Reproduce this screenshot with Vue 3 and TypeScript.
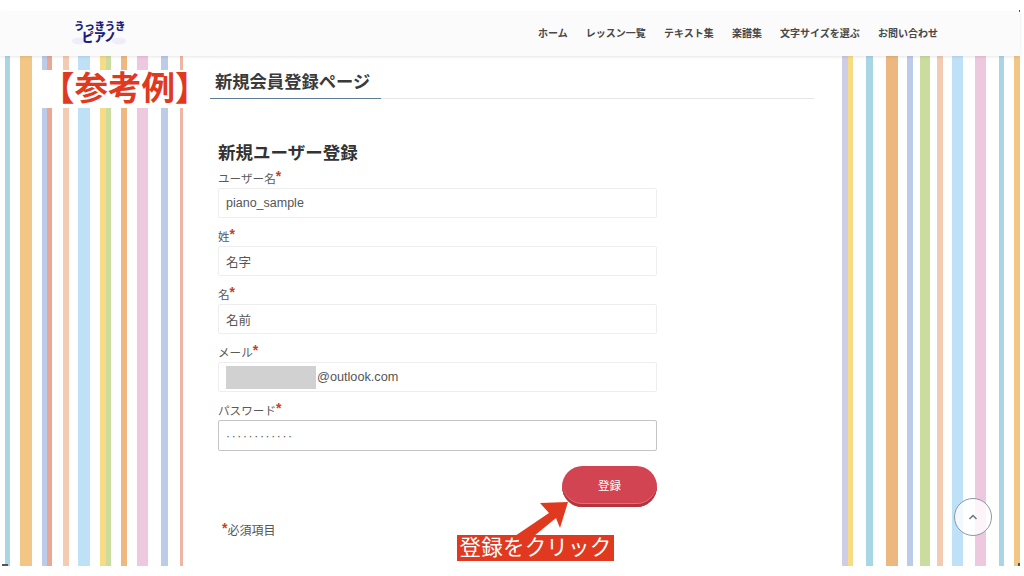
<script setup lang="ts">
interface Field { label: string; value: string; masked?: boolean; active?: boolean }
const navItems: string[] = ['ホーム', 'レッスン一覧', 'テキスト集', '楽譜集', '文字サイズを選ぶ', 'お問い合わせ']
const fields: Field[] = [
  { label: 'ユーザー名', value: 'piano_sample' },
  { label: '姓', value: '名字' },
  { label: '名', value: '名前' },
  { label: 'メール', value: '@outlook.com', masked: true },
  { label: 'パスワード', value: '············', active: true },
]
</script>

<template>
  <div class="page">
    <header class="header">
      <div class="logo">
        <svg class="cloud" width="56" height="14" viewBox="0 0 56 14">
          <ellipse cx="8" cy="8" rx="7" ry="3.5" fill="#eeedf9" />
          <ellipse cx="48" cy="8" rx="7" ry="3.5" fill="#eeedf9" />
        </svg>
        <span class="logo-text">うっきうき<br /><span class="logo-big">ピアノ</span></span>
      </div>
      <nav class="nav">
        <a v-for="item in navItems" :key="item" class="nav-item">{{ item }}</a>
      </nav>
    </header>

    <main class="main">
      <div class="stripes stripes-left"></div>
      <section class="content">
        <div class="title-bar"><h1 class="title">新規会員登録ページ</h1></div>
        <form class="form" @submit.prevent>
          <h2 class="form-title">新規ユーザー登録</h2>
          <div v-for="f in fields" :key="f.label" class="field">
            <label class="label">{{ f.label }}<span class="star">*</span></label>
            <div class="input" :class="{ 'input-active': f.active, 'input-email': f.masked }">
              <span v-if="f.masked" class="mask"></span>
              <span :class="{ dots: f.active }">{{ f.value }}</span>
            </div>
          </div>
          <div class="actions"><button class="submit" type="button">登録</button></div>
          <p class="required"><span class="star">*</span>必須項目</p>
        </form>
      </section>
      <div class="stripes stripes-right"></div>
    </main>

    <div class="sample"><span>【参考例】</span></div>
    <svg class="arrow" width="70" height="50" viewBox="0 0 70 50">
      <polygon points="66,2 38,3 47,13 13,36 32,36 54,18 58,28" fill="#e0391f" />
    </svg>
    <div class="callout">登録をクリック</div>
    <button class="to-top" type="button" aria-label="ページ上部へ">
      <svg width="12" height="8" viewBox="0 0 12 8"><path d="M2.5 6 L6 2.5 L9.500 6" fill="none" stroke="#66727e" stroke-width="1.4" /></svg>
    </button>
    <i class="corner corner-left"></i>
    <i class="corner corner-right"></i>
    <i class="edge"></i>
  </div>
</template>

<style>
html, body { margin: 0; background: #fff; }
</style>

<style scoped>
.page {
  position: relative;
  width: 1024px;
  height: 576px;
  overflow: hidden;
  box-sizing: border-box;
  padding: 12px 4px 10px 0;
  display: flex;
  flex-direction: column;
  background: #fff;
  color: #444;
  font-family: "Liberation Sans", "Noto Sans CJK JP", sans-serif;
}
.header {
  position: relative;
  z-index: 2;
  height: 44px;
  flex: none;
  display: flex;
  align-items: center;
  justify-content: space-between;
  padding: 0 82px 0 74px;
  background: #fbfbfb;
  box-shadow: 0 1px 3px rgba(0, 0, 0, 0.1);
}
.logo { position: relative; width: 50px; height: 26px; margin-top: -3px; }
.cloud { position: absolute; left: -3px; top: 13px; }
.logo-text {
  position: relative;
  display: block;
  text-align: center;
  font-size: 10.5px;
  line-height: 12px;
  font-weight: 900;
  color: #1c1f80;
  white-space: nowrap;
  letter-spacing: -0.2px;
}
.logo-big { font-size: 12px; }
.nav { display: flex; gap: 18.2px; }
.nav-item { font-size: 10px; line-height: 14px; font-weight: 700; color: #484848; white-space: nowrap; }
.main {
  flex: 1;
  min-height: 0;
  display: grid;
  grid-template-columns: 184px 658px 178px;
}
.stripes-left {
  background: linear-gradient(90deg,
    #fff 5px, #a9d6e5 5px 10px, #fff 10px 20px, #f2c785 20px 32px, #fff 32px 42px,
    #bccbe8 42px 47px, #eaa892 47px 52px, #fff 52px 63px, #f3cbb3 63px 69px, #fff 69px 78px,
    #bfe1f8 78px 90px, #fff 90px 100px, #f8dc85 100px 106px, #cbdd9e 106px 111px, #fff 111px 121px,
    #efb881 121px 127px, #fff 127px 137px, #eec8de 137px 148px, #fff 148px 161px,
    #bccbe8 161px 168px, #fff 168px 180px, #eeb5a4 180px 183px, #fff 183px);
}
.stripes-right {
  background: linear-gradient(90deg,
    #cfcce5 0 6px, #f8dc85 6px 11px, #fff 11px 24px, #a9d6e5 24px 31px, #fff 31px 44px,
    #ecb87f 44px 56px, #fff 56px 65px, #bccbe8 65px 71px, #fff 71px 78px, #cbdd9e 78px 88px,
    #fff 88px 95px, #f3cbb3 95px 101px, #fff 101px 110px, #bfe1f8 110px 121px, #fff 121px 133px,
    #eec8de 133px 144px, #fff 144px 157px, #a9d6e5 157px 162px, #fff 162px 172px, #f2c785 172px);
}
.content { padding: 14px 28px 0 26px; background: #fff; min-width: 0; }
.title-bar { height: 28px; border-bottom: 1px solid #e6e6e6; }
.title {
  display: inline-block;
  box-sizing: border-box;
  height: 29px;
  width: 171px;
  margin: 0;
  padding-left: 5px;
  font-size: 17.3px;
  line-height: 24px;
  font-weight: 700;
  color: #3a3a3a;
  white-space: nowrap;
  border-bottom: 1px solid #5d7d96;
}
.form { width: 439px; margin: 42px 0 0 8px; }
.form-title { margin: 0 0 4px; font-size: 17.5px; line-height: 24px; font-weight: 700; color: #333; white-space: nowrap; }
.field { display: block; margin-bottom: 9px; }
.label { display: block; height: 19px; font-size: 11.6px; line-height: 19px; color: #5a5a5a; white-space: nowrap; }
.star { color: #c8401f; font-size: 14px; line-height: 10px; font-weight: 700; vertical-align: 2px; }
.input {
  box-sizing: border-box;
  height: 30px;
  display: flex;
  align-items: center;
  padding-left: 7px;
  background: #fff;
  border: 1px solid #eeeeee;
  border-radius: 2px;
  font-size: 12.5px;
  color: #555;
}
.input-email { font-size: 12.7px; }
.input-active { height: 31px; border-color: #c4c4c4; }
.dots { font-size: 12px; letter-spacing: 1.65px; color: #555; }
.mask { width: 90px; height: 23px; background: #d1d1d1; margin-right: 1px; }
.actions { display: flex; justify-content: flex-end; margin-top: 15px; }
.submit {
  width: 95px;
  height: 41px;
  padding: 0 0 4px;
  border: 0;
  border-radius: 21px;
  background: #d24451;
  box-shadow: inset 0 -3px 0 #b8323c, inset 0 -4px 0 #d9707a;
  color: #fff;
  font-family: inherit;
  font-size: 11.500px;
}
.required { margin: 13px 0 0 4px; font-size: 12px; line-height: 22px; color: #555; white-space: nowrap; }
.sample {
  position: absolute;
  z-index: 3;
  left: 42px;
  top: 70px;
  width: 148px;
  height: 38px;
  background: #fff;
}
.sample span {
  display: block;
  margin-left: -1px;
  font-size: 33.500px;
  line-height: 38px;
  font-weight: 700;
  color: #e0391f;
  white-space: nowrap;
}
.arrow { position: absolute; z-index: 3; left: 502px; top: 500px; }
.callout {
  position: absolute;
  z-index: 4;
  left: 457px;
  top: 535px;
  width: 157px;
  height: 26px;
  background: #e0391f;
  color: #fff;
  font-size: 21.5px;
  line-height: 26px;
  text-align: center;
  white-space: nowrap;
  letter-spacing: 0.2px;
}
.to-top {
  position: absolute;
  z-index: 4;
  left: 954px;
  top: 498px;
  width: 38px;
  height: 38px;
  padding: 0;
  display: flex;
  align-items: center;
  justify-content: center;
  border: 1px solid #8c98a6;
  border-radius: 50%;
  background: rgba(255, 255, 255, 0.8);
}
.corner { position: absolute; background: #555; }
.corner-left { left: 2px; top: 564px; width: 6px; height: 2px; }
.corner-right { left: 1018px; top: 563px; width: 2px; height: 3px; }
.edge { position: absolute; left: 1019px; top: 10px; width: 1px; height: 46px; background: #555; }
</style>
